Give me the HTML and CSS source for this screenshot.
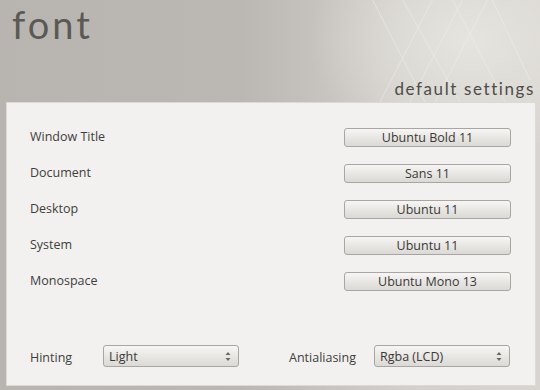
FILE: index.html
```html
<!DOCTYPE html>
<html lang="en">
<head>
    <meta charset="UTF-8">
    <meta name="viewport" content="width=device-width, initial-scale=1.0">
    <title>font</title>
    <link rel="stylesheet" href="styles.css">
</head>
<body>
    <div class="header">
        <svg class="lattice" width="200" height="102" viewBox="0 0 200 102">
            <g stroke="#f1efeb" stroke-width="1" fill="none" opacity="0.55">
                <path d="M40 102 L95 -5"/>
                <path d="M70 102 L125 -5"/>
                <path d="M95 102 L150 -5"/>
                <path d="M30 -5 L85 102"/>
                <path d="M60 -5 L120 102"/>
                <path d="M110 -5 L165 102"/>
                <path d="M150 -5 L190 80"/>
            </g>
        </svg>
        <h1 class="title">font</h1>
        <div class="subtitle">default settings</div>
    </div>

    <div class="panel">
        <div class="font-list">
            <div class="row">
                <span class="label">Window Title</span>
                <button class="font-btn">Ubuntu Bold 11</button>
            </div>
            <div class="row">
                <span class="label">Document</span>
                <button class="font-btn">Sans 11</button>
            </div>
            <div class="row">
                <span class="label">Desktop</span>
                <button class="font-btn">Ubuntu 11</button>
            </div>
            <div class="row">
                <span class="label">System</span>
                <button class="font-btn">Ubuntu 11</button>
            </div>
            <div class="row">
                <span class="label">Monospace</span>
                <button class="font-btn">Ubuntu Mono 13</button>
            </div>
        </div>

        <div class="options">
            <div class="option">
                <span class="label hint-label">Hinting</span>
                <div class="combo">
                    <span>Light</span>
                    <svg width="6" height="11" viewBox="0 0 6 11"><path d="M0.5 4 L3 1 L5.5 4 Z M0.5 7 L3 10 L5.5 7 Z" fill="#6a6865"/></svg>
                </div>
            </div>
            <div class="option">
                <span class="label aa-label">Antialiasing</span>
                <div class="combo">
                    <span>Rgba (LCD)</span>
                    <svg width="6" height="11" viewBox="0 0 6 11"><path d="M0.5 4 L3 1 L5.5 4 Z M0.5 7 L3 10 L5.5 7 Z" fill="#6a6865"/></svg>
                </div>
            </div>
        </div>
    </div>
</body>
</html>
```

FILE: styles.css
```css
body {
    margin: 0;
    width: 540px;
    height: 390px;
    overflow: hidden;
    font-family: "Open Sans", "DejaVu Sans", sans-serif;
    background:
        radial-gradient(ellipse 160px 120px at 470px 40px, #e6e4df 0%, rgba(230, 228, 223, 0) 100%),
        linear-gradient(to right, #b8b5b0 0%, #bbb8b3 45%, #d3d0cb 75%, #d8d5d0 100%);
}
.header {
    position: relative;
    height: 102px;
    display: flex;
    flex-direction: column;
    justify-content: space-between;
}
.lattice {
    position: absolute;
    top: 0;
    right: 0;
}
.title {
    position: relative;
    margin: 0;
    padding: 3px 0 0 12px;
    font-family: "Lato", sans-serif;
    font-weight: 400;
    font-size: 38px;
    letter-spacing: 3px;
    line-height: 42px;
    color: #5b5955;
}
.subtitle {
    position: relative;
    align-self: flex-end;
    padding-right: 5px;
    margin-bottom: 3px;
    font-family: "Lato", sans-serif;
    font-size: 17px;
    letter-spacing: 1.6px;
    color: #4e4c49;
}
.panel {
    margin: 0 4px 0 6px;
    height: 284px;
    box-sizing: border-box;
    background-color: #f2f1ef;
    border: 1px solid #dcdad6;
    padding: 25px 24px 18px 23px;
    display: flex;
    flex-direction: column;
}
.font-list {
    display: flex;
    flex-direction: column;
    gap: 17px;
}
.row {
    display: flex;
    justify-content: space-between;
    align-items: center;
    height: 19px;
}
.label {
    font-size: 12.5px;
    color: #3f3e3c;
    margin-top: -3px;
}
.font-btn {
    width: 167px;
    height: 19px;
    padding: 0;
    border: 1px solid #a8a6a2;
    border-radius: 3px;
    background: linear-gradient(to bottom, #f7f6f5 0%, #e9e7e4 50%, #dbd9d5 100%);
    font-family: "Open Sans", "DejaVu Sans", sans-serif;
    font-size: 12.5px;
    color: #3a3937;
    line-height: 17px;
}
.options {
    margin-top: auto;
    display: flex;
    align-items: center;
}
.option {
    display: flex;
    align-items: center;
}
.option .label {
    margin-top: 2px;
}
.hint-label {
    width: 73px;
}
.aa-label {
    margin-left: 50px;
    width: 85px;
}
.combo {
    width: 136px;
    height: 22px;
    box-sizing: border-box;
    border: 1px solid #a8a6a2;
    border-radius: 3px;
    background: linear-gradient(to bottom, #f7f6f5 0%, #e9e7e4 50%, #dcdad6 100%);
    display: flex;
    align-items: center;
    justify-content: space-between;
    padding: 0 7px 0 5px;
    font-size: 12.5px;
    color: #3a3937;
}
```
